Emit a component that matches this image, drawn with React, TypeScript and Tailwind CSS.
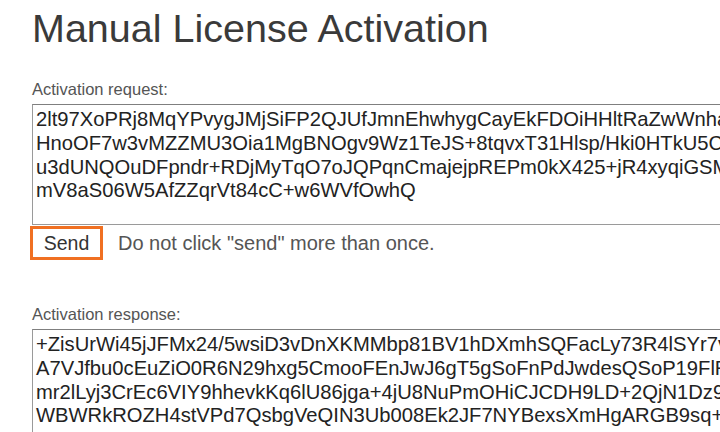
const REQUEST = [
  "2lt97XoPRj8MqYPvygJMjSiFP2QJUfJmnEhwhygCayEkFDOiHHltRaZwWnha",
  "HnoOF7w3vMZZMU3Oia1MgBNOgv9Wz1TeJS+8tqvxT31Hlsp/Hki0HTkU5C",
  "u3dUNQOuDFpndr+RDjMyTqO7oJQPqnCmajejpREPm0kX425+jR4xyqiGSM",
  "mV8aS06W5AfZZqrVt84cC+w6WVfOwhQ",
];

const RESPONSE = [
  "+ZisUrWi45jJFMx24/5wsiD3vDnXKMMbp81BV1hDXmhSQFacLy73R4lSYr7v",
  "A7VJfbu0cEuZiO0R6N29hxg5CmooFEnJwJ6gT5gSoFnPdJwdesQSoP19FlR",
  "mr2lLyj3CrEc6VIY9hhevkKq6lU86jga+4jU8NuPmOHiCJCDH9LD+2QjN1Dz9",
  "WBWRkROZH4stVPd7QsbgVeQIN3Ub008Ek2JF7NYBexsXmHgARGB9sq+",
];

function CodeBox({ lines }: { lines: string[] }) {
  return (
    <div className="h-[121px] w-[780px] overflow-hidden border border-[#9a9a9a] border-t-[#7f7f7f] bg-white pl-[3px] pt-[3px] text-[20.2px] leading-[23.8px] text-[#222]">
      {lines.map((line) => (
        <div key={line} className="whitespace-nowrap">
          {line}
        </div>
      ))}
    </div>
  );
}

export default function App() {
  return (
    <div className="h-[432px] w-[720px] overflow-hidden bg-white pl-[32px] font-['Liberation_Sans',Arial,sans-serif]">
      <h1 className="pt-[6px] text-[39.5px] leading-[44px] text-[#3a3a3a]">
        Manual License Activation
      </h1>

      <div className="mt-[29px] text-[16.5px] leading-[20px] text-[#555]">
        Activation request:
      </div>
      <div className="mt-[5px]">
        <CodeBox lines={REQUEST} />
      </div>

      <div className="mt-[1px] flex items-center gap-[15px]">
        <button
          type="button"
          className="-ml-[2px] h-[34px] w-[73px] border-[3px] border-[#f07022] bg-white text-[19.5px] leading-[24px] text-[#333]"
        >
          Send
        </button>
        <span className="text-[20px] leading-[24px] text-[#555]">
          Do not click "send" more than once.
        </span>
      </div>

      <div className="mt-[44px] text-[16.5px] leading-[20px] text-[#555]">
        Activation response:
      </div>
      <div className="mt-[5px]">
        <CodeBox lines={RESPONSE} />
      </div>
    </div>
  );
}
